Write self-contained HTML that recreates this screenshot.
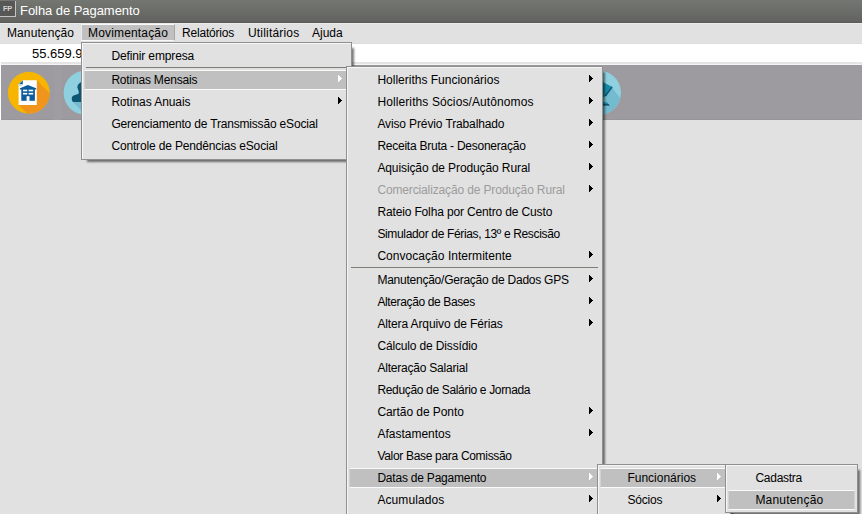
<!DOCTYPE html>
<html><head><meta charset="utf-8"><title>Folha de Pagamento</title>
<style>
*{box-sizing:border-box;margin:0;padding:0}
html,body{width:862px;height:514px;overflow:hidden;background:#e1e1e1;font-family:"Liberation Sans",sans-serif;font-size:12px;color:#000}
.abs{position:absolute}
#title{left:0;top:0;width:862px;height:23px;background:linear-gradient(#747671,#62635e);border-bottom:1px solid #5b5c57}
#title .ico{left:0;top:1px;width:16px;height:16px;background:#575755;border-right:1px solid #c4c4c4;border-bottom:1px solid #c4c4c4;color:#d4d4d4;font-size:7.5px;font-weight:bold;line-height:15px;text-align:center;letter-spacing:-0.3px}
#title .t{left:20px;top:3px;color:#fff;font-size:13px;line-height:16px;white-space:nowrap}
#mbar{left:0;top:23px;width:862px;height:21px;background:#e1e1e1;border-top:1px solid #ebebeb;border-bottom:1px solid #dcdcdc}
#mbar span{position:absolute;top:0px;line-height:19px;white-space:nowrap}
#mbar .sel{position:absolute;left:81px;top:0px;width:94px;height:17px;background:#c0c0c0;border-top:1px solid #f8f8f8;border-bottom:1px solid #f8f8f8;border-left:1px solid #ececec;border-right:1px solid #a8a8a8}
#lcol{left:0;top:44px;width:1px;height:76px;background:#fff}
#strip{left:0;top:44px;width:862px;height:21px;background:#fff;border-bottom:1px solid #f4f4f4}
#strip::after{content:"";position:absolute;left:0;right:0;top:18px;height:2px;background:#e4e4e4}
#strip span{position:absolute;left:32px;top:-1px;line-height:21px;font-size:13px}
#tbar{left:1px;top:65px;width:861px;height:55px;background:#9d9aa0;border-bottom:1px solid #979599}
.menu{position:absolute;background:#e1e1e1;border:1px solid #8f8f8f;box-shadow:4px 4px 2px -2px rgba(0,0,0,.52)}
.menu::before{content:"";box-sizing:border-box;position:absolute;left:0;top:0;right:0;bottom:0;border-left:1px solid #f6f6f6;border-top:1px solid #f6f6f6}
.it{position:absolute;left:2px;right:2px;height:22px;line-height:22px;white-space:nowrap}
.it span{position:absolute;left:27.4px;top:0}
#m2 .it span{left:28.4px}
.it.hl::before{content:"";position:absolute;box-sizing:border-box;left:0;right:0;top:1px;height:20px;background:#c0c0c0;border-top:1px solid #fafafa;border-bottom:1px solid #fafafa;border-left:1px solid #d2d2d2;border-right:1px solid #d2d2d2}
.it.dis{color:#9c9c9c}
.ar{position:absolute;right:7px;top:6px;width:4px;height:7px;background:#000;clip-path:polygon(0 0,1px 0,1px 1px,2px 1px,2px 2px,3px 2px,3px 3px,4px 3px,4px 4px,3px 4px,3px 5px,2px 5px,2px 6px,1px 6px,1px 7px,0 7px)}
.hl .ar{background:#fff}
.sep{position:absolute;left:4px;right:4px;height:1px;background:#7c7d76}
</style></head><body>
<div id="title" class="abs"><div class="ico abs">FP</div><div class="t abs" style="letter-spacing:-0.053px">Folha de Pagamento</div></div>
<div id="mbar" class="abs"><div class="sel"></div>
<span style="left:7px;letter-spacing:0.100px">Manutenção</span><span style="left:88px;letter-spacing:0.164px">Movimentação</span><span style="left:182px;letter-spacing:-0.200px">Relatórios</span><span style="left:248px;letter-spacing:0.180px">Utilitários</span><span style="left:312px;letter-spacing:0.000px">Ajuda</span></div>
<div id="strip" class="abs"><span>55.659.9</span></div>
<div id="lcol" class="abs"></div>
<div id="tbar" class="abs">
<svg width="861" height="55" viewBox="0 0 861 55" class="abs" style="left:0;top:0">
<defs>
<clipPath id="c1"><circle cx="27.8" cy="27.7" r="20.9"/></clipPath>
<clipPath id="c2"><circle cx="84.8" cy="27.8" r="22.2"/></clipPath>
<clipPath id="c3"><circle cx="597.8" cy="27.8" r="22.2"/></clipPath>
</defs>
<rect x="53" y="0" width="7" height="55" fill="#9f9ca3"/>
<circle cx="27.8" cy="27.7" r="20.9" fill="#f7b500"/>
<g clip-path="url(#c1)">
<polygon points="35.8,15.2 75.8,55.2 57.6,80 17.6,40" fill="#f0951c"/>
</g>
<polygon points="21.6,15.2 35.8,15.2 35.8,40 17.6,40 17.6,19.2" fill="#fff"/>
<polygon points="17.6,19.4 21.8,15.2 21.8,19.4" fill="#17649f"/>
<rect x="17.6" y="19.2" width="3.6" height="2" fill="#c4e1ee"/>
<g fill="#0c5c9e">
<polygon points="26.8,19.9 35.2,23.2 35.2,24.4 18.9,24.4 18.9,23.2"/>
<rect x="20.3" y="23.9" width="13.6" height="11.9"/>
</g>
<g fill="#fff">
<rect x="22" y="24.7" width="4.2" height="1.6"/><rect x="27.6" y="24.7" width="4.6" height="1.6"/>
<rect x="22" y="27.9" width="4.2" height="1.6"/><rect x="27.6" y="27.9" width="4.6" height="1.6"/>
<rect x="25.6" y="31.2" width="2.9" height="4.7"/>
</g>
<circle cx="84.8" cy="27.8" r="22.2" fill="#8ed0e0"/>
<g clip-path="url(#c2)">
<polygon points="71.8,36.9 98,36.9 130,69 104,69" fill="#74bbcf"/>
<g fill="#0d5775">
<ellipse cx="84.8" cy="22.2" rx="8.4" ry="6.2"/>
<rect x="77.7" y="24" width="14.2" height="6"/>
<path d="M77.700 28.800L72.500 30.500Q70.700 31.500 70.700 33.500L71.200 36Q71.500 36.900 72.500 36.900L97.100 36.900Q98.100 36.900 98.400 36L98.900 33.500Q98.900 31.500 97.100 30.500L91.900 28.800Z"/>
</g>
</g>
<circle cx="597.8" cy="27.8" r="22.2" fill="#8ed0e0"/>
<g clip-path="url(#c3)">
<polygon points="610.8,22 650,74.5 650,80 590,80 590,32 603.5,32" fill="#74bbcf"/>
<polygon points="599,15.5 610.8,21.800 603.5,32 599,32" fill="#168ba5"/>
<polygon points="610.8,21.2 611.6,22.4 605,31.6 603.6,30.6" fill="#0d5775"/>
<polygon points="599,37.2 606,37.2 608.7,40.5 599,40.5" fill="#1f8ea8"/>
<polygon points="599,39 607.5,39 608.7,40.5 599,40.5" fill="#0d5775"/>
</g>
</svg>
</div>
<div class="menu" id="m1" style="left:81px;top:42px;width:271px;height:118px">
<div class="it" style="top:2px"><span style="letter-spacing:-0.129px">Definir empresa</span></div>
<div class="sep" style="top:24px"></div>
<div class="it hl" style="top:26px"><span style="letter-spacing:-0.193px">Rotinas Mensais</span><i class="ar"></i></div>
<div class="it" style="top:48px"><span style="letter-spacing:-0.069px">Rotinas Anuais</span><i class="ar"></i></div>
<div class="it" style="top:70px"><span style="letter-spacing:-0.180px">Gerenciamento de Transmissão eSocial</span></div>
<div class="it" style="top:92px"><span style="letter-spacing:-0.155px">Controle de Pendências eSocial</span></div>
</div>
<div class="menu" id="m2" style="left:346px;top:66px;width:257px;height:460px">
<div class="it" style="top:2px"><span>Holleriths Funcionários</span><i class="ar"></i></div>
<div class="it" style="top:24px"><span style="letter-spacing:0.104px">Holleriths Sócios/Autônomos</span><i class="ar"></i></div>
<div class="it" style="top:46px"><span style="letter-spacing:-0.123px">Aviso Prévio Trabalhado</span><i class="ar"></i></div>
<div class="it" style="top:68px"><span style="letter-spacing:-0.242px">Receita Bruta - Desoneração</span><i class="ar"></i></div>
<div class="it" style="top:90px"><span style="letter-spacing:-0.104px">Aquisição de Produção Rural</span><i class="ar"></i></div>
<div class="it dis" style="top:112px"><span style="letter-spacing:-0.141px">Comercialização de Produção Rural</span><i class="ar"></i></div>
<div class="it" style="top:134px"><span style="letter-spacing:-0.145px">Rateio Folha por Centro de Custo</span></div>
<div class="it" style="top:156px"><span style="letter-spacing:-0.344px">Simulador de Férias, 13º e Rescisão</span></div>
<div class="it" style="top:178px"><span style="letter-spacing:0.041px">Convocação Intermitente</span><i class="ar"></i></div>
<div class="sep" style="top:200px"></div>
<div class="it" style="top:202px"><span style="letter-spacing:-0.240px">Manutenção/Geração de Dados GPS</span><i class="ar"></i></div>
<div class="it" style="top:224px"><span style="letter-spacing:-0.371px">Alteração de Bases</span><i class="ar"></i></div>
<div class="it" style="top:246px"><span style="letter-spacing:-0.117px">Altera Arquivo de Férias</span><i class="ar"></i></div>
<div class="it" style="top:268px"><span style="letter-spacing:-0.150px">Cálculo de Dissídio</span></div>
<div class="it" style="top:290px"><span style="letter-spacing:-0.212px">Alteração Salarial</span></div>
<div class="it" style="top:312px"><span style="letter-spacing:-0.333px">Redução de Salário e Jornada</span></div>
<div class="it" style="top:334px"><span style="letter-spacing:-0.064px">Cartão de Ponto</span><i class="ar"></i></div>
<div class="it" style="top:356px"><span>Afastamentos</span><i class="ar"></i></div>
<div class="it" style="top:378px"><span style="letter-spacing:-0.313px">Valor Base para Comissão</span></div>
<div class="it hl" style="top:400px"><span style="letter-spacing:-0.212px">Datas de Pagamento</span><i class="ar"></i></div>
<div class="it" style="top:422px"><span style="letter-spacing:0.100px">Acumulados</span><i class="ar"></i></div>
</div>
<div class="menu" id="m3" style="left:597px;top:464px;width:134px;height:60px">
<div class="it hl" style="top:2px"><span>Funcionários</span><i class="ar"></i></div>
<div class="it" style="top:24px"><span style="letter-spacing:-0.180px">Sócios</span><i class="ar"></i></div>
</div>
<div class="menu" id="m4" style="left:725px;top:464px;width:133px;height:49px">
<div class="it" style="top:2px"><span style="letter-spacing:-0.257px">Cadastra</span></div>
<div class="it hl" style="top:24px"><span style="letter-spacing:0.200px">Manutenção</span></div>
</div>
</body></html>
